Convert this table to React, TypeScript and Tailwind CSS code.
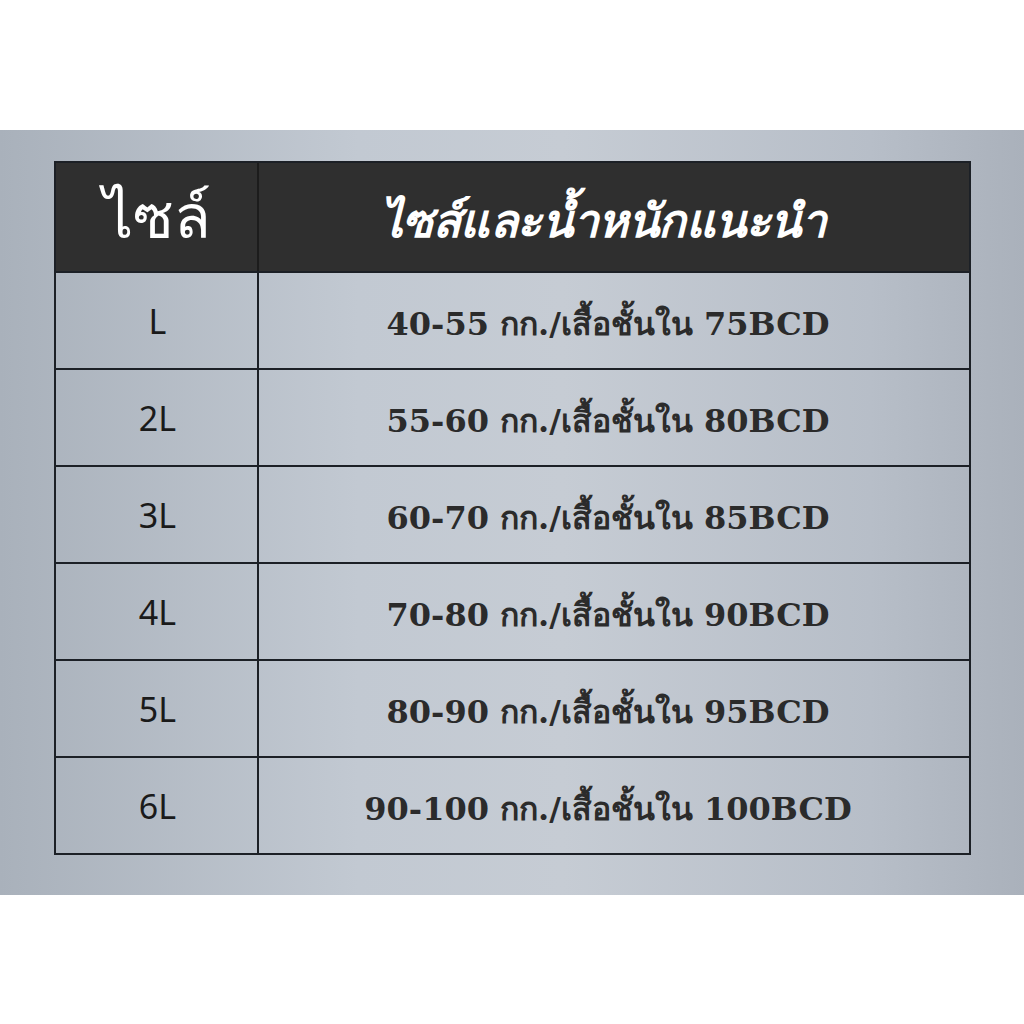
import React from "react";

const rows = [
  ["L", "40-55 กก./เสื้อชั้นใน 75BCD"],
  ["2L", "55-60 กก./เสื้อชั้นใน 80BCD"],
  ["3L", "60-70 กก./เสื้อชั้นใน 85BCD"],
  ["4L", "70-80 กก./เสื้อชั้นใน 90BCD"],
  ["5L", "80-90 กก./เสื้อชั้นใน 95BCD"],
  ["6L", "90-100 กก./เสื้อชั้นใน 100BCD"],
];

export default function App() {
  return (
    <div className="w-[1024px] h-[1024px] bg-white" style={{ fontFamily: '"Noto Sans", "Liberation Sans", sans-serif' }}>
      <div className="h-[130px]" />
      <div className="h-[765px] bg-[linear-gradient(90deg,#a9b1bb_0%,#c2c9d2_35%,#c6ccd4_55%,#b7bec8_85%,#aab1bb_100%)] px-[54px] pt-[31px]">
        <div className="w-[917px] border-2 border-[#1c2026]">
          <div className="grid grid-cols-[203px_1fr] h-[108px] bg-[#2f2f2f]">
            <div className="flex items-center justify-center border-r-2 border-[#1c1c1c] text-white text-[60px] leading-none pb-[4px]">ไซล์</div>
            <div className="flex items-center justify-center text-white text-[46px] font-bold italic leading-none tracking-[-0.5px] pr-[22px] pt-[3px]">ไซส์และน้ำหนักแนะนำ</div>
          </div>
          {rows.map(([s, d], i) => (
            <div key={i} className="grid grid-cols-[203px_1fr] h-[97px] border-t-2 border-[#1c2026]">
              <div className="flex items-center justify-center border-r-2 border-[#1c2026] text-[#1a1a1a] text-[34px] leading-none pl-[2px]">{s}</div>
              <div
                className="flex items-center justify-center text-[#2b2b2b] text-[32px] font-bold leading-none pt-[6px] pr-[12px]"
                style={{ fontFamily: '"DejaVu Serif", "Noto Sans", serif' }}
              >
                {d}
              </div>
            </div>
          ))}
        </div>
      </div>
    </div>
  );
}
